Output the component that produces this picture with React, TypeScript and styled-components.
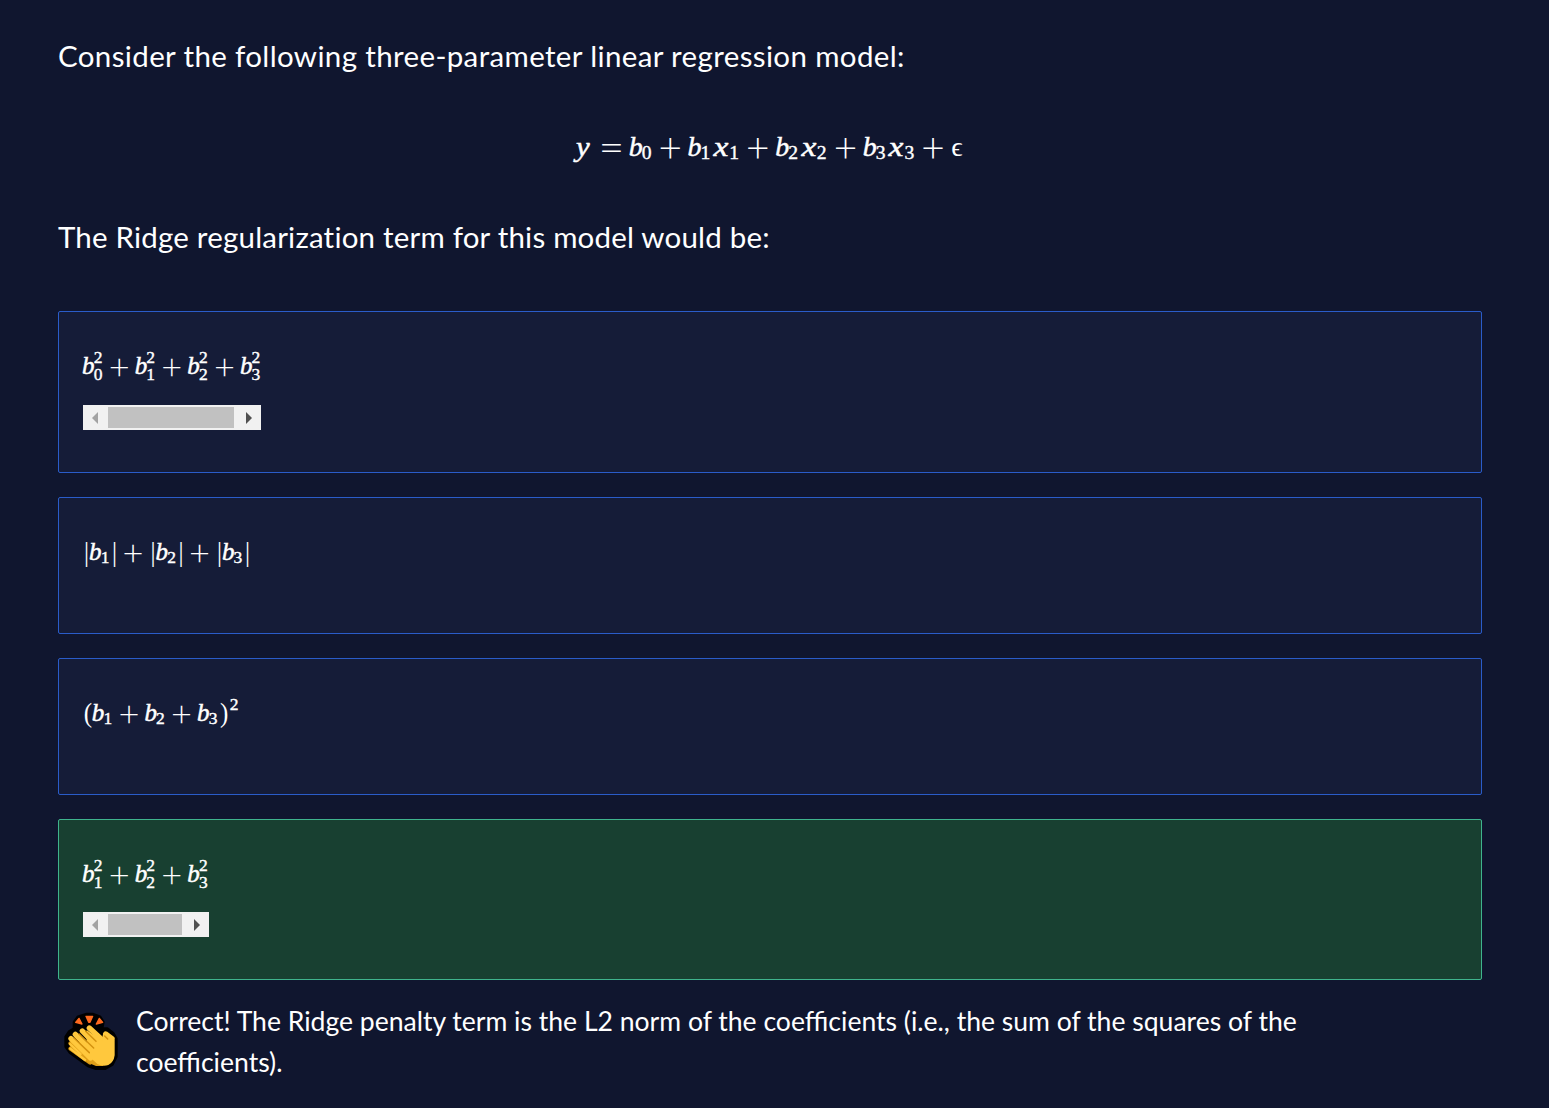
import React from 'react';
import styled, { createGlobalStyle } from 'styled-components';

const Global = createGlobalStyle`
  * { box-sizing: border-box; }
  body { margin: 0; background: #10162f; color: #fff; }
`;

const Page = styled.main`
  display: flex;
  flex-direction: column;
  width: 1549px;
  height: 1108px;
  padding: 35px 67px 0 58px;
  background: #10162f;
  overflow: hidden;
`;

const Prompt = styled.p<{ $spacing: number }>`
  margin: 0;
  height: 42px;
  font: 400 29.5px/42px Lato, sans-serif;
  letter-spacing: ${(p) => p.$spacing}px;
  white-space: nowrap;
`;

const Equation = styled.div`
  display: flex;
  justify-content: center;
  height: 139px;
  padding-top: 50px;
`;

const Formula = styled.div<{ $size: number }>`
  display: flex;
  height: 40px;
  font: 400 ${(p) => p.$size}px/40px 'Liberation Serif', serif;
  white-space: nowrap;
`;

const Glyph = styled.span<{ $w: number; $stretch?: number; $tall?: number; $italic?: boolean; $start?: boolean }>`
  display: flex;
  justify-content: ${(p) => (p.$start ? 'flex-start' : 'center')};
  width: ${(p) => p.$w}em;
  font-style: ${(p) => (p.$italic ? 'italic' : 'normal')};
  transform: scale(${(p) => p.$stretch ?? 1}, ${(p) => p.$tall ?? 1});
  -webkit-text-stroke: ${(p) => (p.$italic ? '0.5px' : '0')};
`;

const Operator = styled.span`
  display: flex;
  justify-content: center;
  width: 1.2222em;
  font-family: Lato, sans-serif;
  font-weight: 300;
`;

const OperatorSign = styled.span<{ $stretch: number }>`
  font-size: 1.45em;
  transform: translate(-0.03em, -0.01em) scaleX(${(p) => p.$stretch});
`;

const Scripts = styled.span`
  display: grid;
  width: 0.4536em;
`;

const Script = styled.span<{ $shift: number }>`
  grid-area: 1 / 1;
  font-size: 0.7em;
  transform: translateY(${(p) => p.$shift}em);
  -webkit-text-stroke: 0.4px;
`;

const Choices = styled.div`
  display: flex;
  flex-direction: column;
  gap: 24px;
  margin-top: 53px;
`;

const Choice = styled.div<{ $height: number; $correct?: boolean }>`
  display: flex;
  flex-direction: column;
  align-items: flex-start;
  height: ${(p) => p.$height}px;
  padding: 34px 24px 0;
  border: 1px solid ${(p) => (p.$correct ? '#3fb48d' : '#2a5cc9')};
  border-radius: 2px;
  background: ${(p) => (p.$correct ? '#184031' : '#151c38')};
`;

const Scrollbar = styled.div<{ $width: number; $top: number }>`
  display: grid;
  grid-template-columns: 25px 1fr 27px;
  align-items: center;
  justify-items: center;
  width: ${(p) => p.$width}px;
  height: 25px;
  margin-top: ${(p) => p.$top}px;
  background: #f1f1f1;
`;

const Thumb = styled.div`
  width: 100%;
  height: 21px;
  background: #c1c1c1;
`;

const Arrow = styled.span<{ $dir: 'left' | 'right' }>`
  border: solid transparent;
  border-width: 6px 0;
  ${(p) => (p.$dir === 'left' ? 'border-right: 6px solid #a3a3a3; margin-right: 1px;' : 'border-left: 6px solid #505050; margin-left: 3px;')}
`;

const Feedback = styled.div`
  display: flex;
  gap: 17px;
  margin-top: 21px;
  padding-left: 5px;
`;

const Clap = styled.svg`
  width: 56px;
  height: 62px;
  margin-top: 9px;
`;

const Message = styled.p`
  margin: 0;
  font: 400 26.55px/41px Lato, sans-serif;
  white-space: nowrap;
`;

const Line = styled.span`
  display: block;
`;

function Sign({ children }: { children: string }) {
  return (
    <Operator>
      <OperatorSign $stretch={children === '=' ? 1.1 : 1}>{children}</OperatorSign>
    </Operator>
  );
}

function Coef({ n, squared }: { n: number; squared?: boolean }) {
  return (
    <>
      <Glyph $w={0.429} $italic>b</Glyph>
      <Scripts>
        {squared && <Script $shift={-0.52}>2</Script>}
        <Script $shift={squared ? 0.45 : 0.29}>{n}</Script>
      </Scripts>
    </>
  );
}

function Variable({ n }: { n: number }) {
  return (
    <>
      <Glyph $w={0.5715} $stretch={1.2} $italic>x</Glyph>
      <Scripts><Script $shift={0.29}>{n}</Script></Scripts>
    </>
  );
}

function Sum({ terms }: { terms: React.ReactNode[] }) {
  return (
    <>
      {terms.map((term, i) => (
        <React.Fragment key={i}>
          {i > 0 && <Sign>+</Sign>}
          {term}
        </React.Fragment>
      ))}
    </>
  );
}

function Abs({ n }: { n: number }) {
  return (
    <>
      <Glyph $w={0.278} $tall={1.12}>|</Glyph>
      <Coef n={n} />
      <Glyph $w={0.278} $tall={1.12} $start>|</Glyph>
    </>
  );
}

function ClapIcon() {
  return (
    <Clap viewBox="9 6 168 186" fill="none" strokeLinecap="round" strokeLinejoin="round">
      <path
        d="M42 42 54 26 80 18 98 18 120 26 130 42 126 62 142 62 160 76 169 92 169 146 157 170 136 182 108 182 84 174 30 134 17 116 17 86 28 70 42 62Z"
        fill="#000"
        stroke="#000"
        strokeWidth="8"
      />
      <path d="M78 25H98L90 43H86Z M57 31 66 48 47 43Z M118 31 128 43 109 48Z" fill="#ff6a1f" stroke="#ff6a1f" strokeWidth="4" />
      <path d="M31 106 84 148M31 122 90 164" stroke="#d4920f" strokeWidth="12" />
      <path d="M31 100 31 122 88 166 108 174 130 174 120 110Z" fill="#e0a019" />
      <path d="M88 60 136 104M67 69 120 124M46 79 104 138M33 92 92 150M137 78 156 92" stroke="#ffc83d" strokeWidth="16" />
      <path d="M80 66 128 100 128 82 137 72 155 84 164 96 164 142Q161 164 145 171Q128 176 112 168L80 138Z" fill="#ffc83d" />
      <path d="M77 70 108 100M57 78 101 120M42 90 88 134M134 84 143 93" stroke="#d4920f" strokeWidth="4.5" />
      <path d="M30 108 62 138M31 122 75 156" stroke="#ffc83d" strokeWidth="7" />
    </Clap>
  );
}

export default function App() {
  return (
    <>
      <Global />
      <Page>
        <Prompt $spacing={0.36}>Consider the following three-parameter linear regression model:</Prompt>
        <Equation>
          <Formula $size={28}>
            <Glyph $w={0.65} $stretch={1.1} $italic $start>y</Glyph>
            <Sign>=</Sign>
            <Sum
              terms={[
                <Coef n={0} />,
                <><Coef n={1} /><Variable n={1} /></>,
                <><Coef n={2} /><Variable n={2} /></>,
                <><Coef n={3} /><Variable n={3} /></>,
                <Glyph $w={0.406}>ϵ</Glyph>,
              ]}
            />
          </Formula>
        </Equation>
        <Prompt $spacing={0.2}>The Ridge regularization term for this model would be:</Prompt>
        <Choices>
          <Choice $height={162}>
            <Formula $size={25}>
              <Sum terms={[0, 1, 2, 3].map((n) => <Coef n={n} squared />)} />
            </Formula>
            <Scrollbar $width={178} $top={19}>
              <Arrow $dir="left" /><Thumb /><Arrow $dir="right" />
            </Scrollbar>
          </Choice>
          <Choice $height={137}>
            <Formula $size={25}>
              <Sum terms={[1, 2, 3].map((n) => <Abs n={n} />)} />
            </Formula>
          </Choice>
          <Choice $height={137}>
            <Formula $size={25}>
              <Glyph $w={0.389} $tall={1.1}>(</Glyph>
              <Sum terms={[1, 2, 3].map((n) => <Coef n={n} />)} />
              <Glyph $w={0.389} $tall={1.1} $start>)</Glyph>
              <Scripts><Script $shift={-0.53}>2</Script></Scripts>
            </Formula>
          </Choice>
          <Choice $height={161} $correct>
            <Formula $size={25}>
              <Sum terms={[1, 2, 3].map((n) => <Coef n={n} squared />)} />
            </Formula>
            <Scrollbar $width={126} $top={18}>
              <Arrow $dir="left" /><Thumb /><Arrow $dir="right" />
            </Scrollbar>
          </Choice>
        </Choices>
        <Feedback>
          <ClapIcon />
          <Message>
            <Line>Correct! The Ridge penalty term is the L2 norm of the coefficients (i.e., the sum of the squares of the</Line>
            <Line>coefficients).</Line>
          </Message>
        </Feedback>
      </Page>
    </>
  );
}
